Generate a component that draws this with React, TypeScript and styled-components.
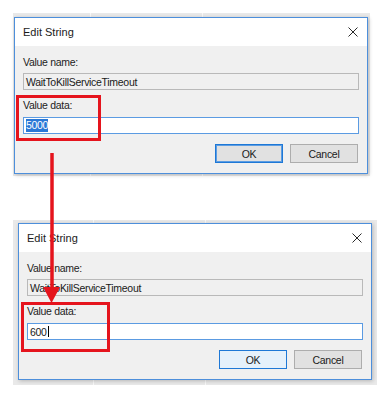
import React from "react";
import styled, { createGlobalStyle } from "styled-components";

const Global = createGlobalStyle`
  html, body { margin: 0; padding: 0; background: #fff; }
  body { font-family: "Liberation Sans", Arial, sans-serif; }
`;

const Page = styled.div`
  position: relative;
  width: 387px;
  height: 400px;
  overflow: hidden;
  background: #fff;
  display: flex;
  flex-direction: column;
  align-items: flex-start;
`;

const Shot = styled.div<{ $mt: number; $pad: string; $l1: number; $l2: number }>`
  margin-top: ${(p) => p.$mt}px;
  margin-left: 13px;
  padding: ${(p) => p.$pad};
  background:
    linear-gradient(to right, transparent ${(p) => p.$l1}px, #f8f8f8 ${(p) => p.$l1}px, #f8f8f8 ${(p) => p.$l1 + 1}px, transparent ${(p) => p.$l1 + 1}px),
    linear-gradient(to right, transparent ${(p) => p.$l2}px, #f8f8f8 ${(p) => p.$l2}px, #f8f8f8 ${(p) => p.$l2 + 1}px, transparent ${(p) => p.$l2 + 1}px),
    #e9e9e9;
`;

const Dialog = styled.div`
  width: 354px;
  box-sizing: border-box;
  border: 1px solid #4d8fdb;
  background: #f0f0f0;
  box-shadow: 1px 1px 4px rgba(0, 0, 0, 0.22);
  display: flex;
  flex-direction: column;
`;

const TitleBar = styled.div`
  height: 28px;
  background: #fff;
  display: flex;
  align-items: center;
  justify-content: space-between;
  padding: 0 9px 0 8px;
`;

const Title = styled.span`
  font-size: 11px;
  color: #1a1a1a;
`;

const Body = styled.div`
  display: flex;
  flex-direction: column;
  padding: 10px 8px 10px 8px;
`;

const Label = styled.div<{ $mt?: number }>`
  font-size: 10.5px;
  letter-spacing: -0.3px;
  line-height: 13px;
  color: #222;
  margin-top: ${(p) => p.$mt ?? 0}px;
`;

const Field = styled.div<{ $focused?: boolean; $mt: number }>`
  box-sizing: border-box;
  height: 17px;
  margin-top: ${(p) => p.$mt}px;
  padding: 0 2px;
  display: flex;
  align-items: center;
  border: 1px solid ${(p) => (p.$focused ? "#5b9be2" : "#b9b9b9")};
  background: ${(p) => (p.$focused ? "#fff" : "#f0f0f0")};
  font-size: 10.5px;
  letter-spacing: -0.3px;
  color: #1a1a1a;
`;

const Selected = styled.span`
  background: #2a78d6;
  color: #fff;
  line-height: 13px;
`;

const Caret = styled.span`
  display: inline-block;
  width: 1px;
  height: 11px;
  background: #000;
  margin-left: 1px;
`;

const Buttons = styled.div`
  display: flex;
  justify-content: flex-end;
  gap: 7px;
  margin-top: 10px;
  padding-right: 1px;
`;

type Variant = "default" | "hover" | "plain";

const Button = styled.div<{ $variant: Variant }>`
  box-sizing: border-box;
  width: 68px;
  height: 19px;
  display: flex;
  align-items: center;
  justify-content: center;
  font-size: 10.5px;
  letter-spacing: -0.3px;
  color: #1a1a1a;
  background: ${(p) => (p.$variant === "hover" ? "#e5f1fb" : "#e1e1e1")};
  border: 1px solid ${(p) => (p.$variant === "plain" ? "#adadad" : "#1e78d6")};
  box-shadow: ${(p) => (p.$variant === "default" ? "inset 0 0 0 1px #5d9de2" : "none")};
`;

const Highlight = styled.div<{ $x: number; $y: number; $w: number; $h: number }>`
  position: absolute;
  left: ${(p) => p.$x}px;
  top: ${(p) => p.$y}px;
  width: ${(p) => p.$w}px;
  height: ${(p) => p.$h}px;
  box-sizing: border-box;
  border: 3px solid #e5141d;
`;

const ArrowSvg = styled.svg`
  position: absolute;
  left: 42px;
  top: 150px;
`;

const CloseIcon = () => (
  <svg width="10" height="10" viewBox="0 0 10 10">
    <path d="M0.5 0.5 L9.5 9.5 M9.5 0.5 L0.5 9.5" stroke="#2a2a2a" strokeWidth="1" fill="none" />
  </svg>
);

type DialogProps = { data: React.ReactNode; ok: Variant };

const EditString = ({ data, ok }: DialogProps) => (
  <Dialog>
    <TitleBar>
      <Title>Edit String</Title>
      <CloseIcon />
    </TitleBar>
    <Body>
      <Label>Value name:</Label>
      <Field $mt={4}>WaitToKillServiceTimeout</Field>
      <Label $mt={9}>Value data:</Label>
      <Field $focused $mt={5}>{data}</Field>
      <Buttons>
        <Button $variant={ok}>OK</Button>
        <Button $variant="plain">Cancel</Button>
      </Buttons>
    </Body>
  </Dialog>
);

export default function App() {
  return (
    <>
      <Global />
      <Page>
        <Shot $mt={13} $pad="4px 2px 2px 1px" $l1={77} $l2={189}>
          <EditString ok="default" data={<Selected>5000</Selected>} />
        </Shot>
        <Shot $mt={44} $pad="3px 5px 5px 5px" $l1={80} $l2={192}>
          <EditString
            ok="hover"
            data={
              <>
                600
                <Caret />
              </>
            }
          />
        </Shot>
        <Highlight $x={16} $y={95} $w={85} $h={46} />
        <Highlight $x={21} $y={302} $w={89} $h={50} />
        <ArrowSvg width="20" height="155" viewBox="0 0 20 155">
          <line x1="10" y1="3" x2="10" y2="140" stroke="#e5141d" strokeWidth="3.5" />
          <polygon points="1,137 18,137 9.5,153" fill="#e5141d" />
        </ArrowSvg>
      </Page>
    </>
  );
}
